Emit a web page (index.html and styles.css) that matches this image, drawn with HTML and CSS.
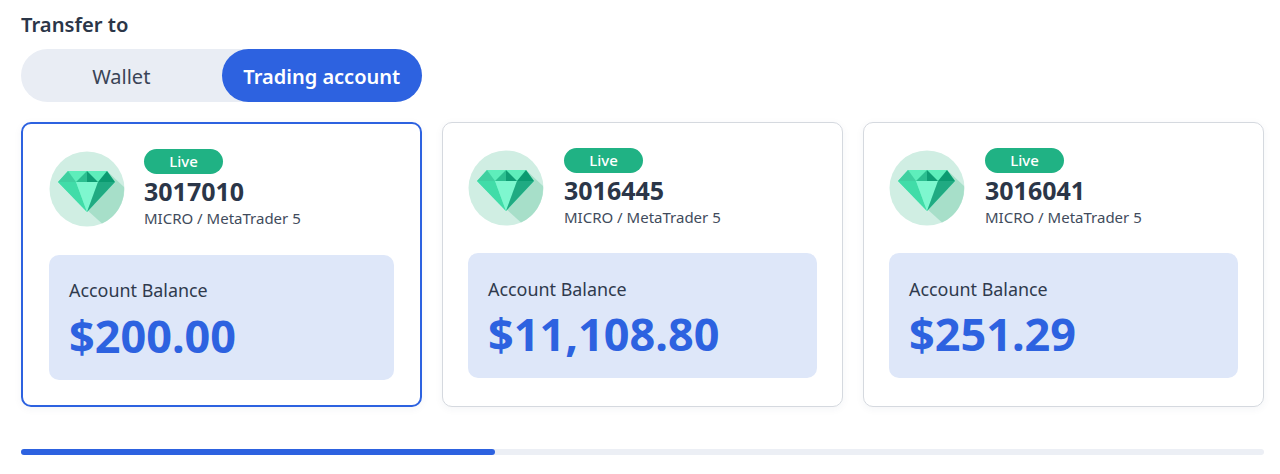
FILE: index.html
```html
<!DOCTYPE html>
<html lang="en">

<head>
  <meta charset="UTF-8" />
  <meta name="viewport" content="width=device-width, initial-scale=1.0" />
  <title>Transfer to</title>
  <link rel="stylesheet" href="styles.css">
</head>

<body>
  <svg class="defs" width="0" height="0">
    <symbol id="gem" viewBox="0 0 76 76">
      <circle cx="38" cy="38" r="37.5" fill="#d0eee3" />
      <path d="M58 20 L75 36 A37.5 37.5 0 0 1 53 72.5 L27 49 Z" fill="#a7dfc9" />
      <path d="M19 20 H58 L66 31 L38 61 L9 31 Z" fill="#5eeebb" />
      <path d="M19 20 L9 31 H27 Z" fill="#3fd0a0" />
      <path d="M38 20 L27 31 H38 Z" fill="#2cbf90" />
      <path d="M38 20 L49 31 H38 Z" fill="#0f9d74" />
      <path d="M58 20 L49 31 H66 Z" fill="#0b9a70" />
      <path d="M9 31 H27 L38 61 Z" fill="#41dca8" />
      <path d="M27 31 H49 L38 61 Z" fill="#7ef7cf" />
      <path d="M49 31 H66 L38 61 Z" fill="#20aa82" />
    </symbol>
  </svg>

  <div class="page">
    <p class="title">Transfer to</p>

    <div class="toggle">
      <button class="toggle-btn">Wallet</button>
      <button class="toggle-btn toggle-btn-active">Trading account</button>
    </div>

    <div class="cards">
      <div class="card card-selected">
        <div class="card-top">
          <svg class="gem-img"><use href="#gem" /></svg>
          <div class="card-info">
            <span class="badge">Live</span>
            <p class="account-id">3017010</p>
            <p class="account-type">MICRO / MetaTrader 5</p>
          </div>
        </div>
        <div class="balance">
          <p class="balance-label">Account Balance</p>
          <p class="balance-value">$200.00</p>
        </div>
      </div>

      <div class="card">
        <div class="card-top">
          <svg class="gem-img"><use href="#gem" /></svg>
          <div class="card-info">
            <span class="badge">Live</span>
            <p class="account-id">3016445</p>
            <p class="account-type">MICRO / MetaTrader 5</p>
          </div>
        </div>
        <div class="balance">
          <p class="balance-label">Account Balance</p>
          <p class="balance-value">$11,108.80</p>
        </div>
      </div>

      <div class="card">
        <div class="card-top">
          <svg class="gem-img"><use href="#gem" /></svg>
          <div class="card-info">
            <span class="badge">Live</span>
            <p class="account-id">3016041</p>
            <p class="account-type">MICRO / MetaTrader 5</p>
          </div>
        </div>
        <div class="balance">
          <p class="balance-label">Account Balance</p>
          <p class="balance-value">$251.29</p>
        </div>
      </div>
    </div>

    <div class="scroll-track">
      <div class="scroll-thumb"></div>
    </div>
  </div>
</body>

</html>
```

FILE: styles.css
```css
/* Global Reset */
p {
  margin: 0;
}

body {
  margin: 0;
  height: 474px;
  overflow: hidden;
  background-color: white;
  font-family: "Noto Sans", Arial, sans-serif;
  color: #2b3648;
}

.defs {
  display: block;
  height: 0;
}

.page {
  width: 1243px;
  padding: 10px 0 0 21px;
}

/* Title */
.title {
  font-size: 20.2px;
  line-height: 28px;
  font-weight: 600;
}

/* Toggle */
.toggle {
  display: flex;
  width: 401px;
  height: 53px;
  margin-top: 11px;
  border-radius: 27px;
  background-color: #e9edf4;
}

.toggle-btn {
  flex: 1;
  border: none;
  border-radius: 27px;
  background: none;
  font-family: inherit;
  font-size: 20px;
  color: #3a4456;
  padding: 2px 0 0;
}

.toggle-btn-active {
  background-color: #2d62e0;
  color: white;
  font-weight: 600;
}

/* Cards */
.cards {
  display: flex;
  gap: 20px;
  margin-top: 20px;
}

.card {
  width: 401px;
  height: 285px;
  box-sizing: border-box;
  padding: 25px 25px 0;
  border: 1px solid #d5d9df;
  border-radius: 10px;
  background-color: white;
  box-shadow: 0 2px 8px rgba(40, 60, 100, 0.05);
}

.card-selected {
  padding: 25px 26px 0;
  border: 2px solid #2d62e0;
}

.card-top {
  display: flex;
  gap: 20px;
  align-items: center;
  height: 80px;
}

.card-selected .card-top {
  gap: 19px;
}

.gem-img {
  width: 76px;
  height: 76px;
  flex-shrink: 0;
}

.card-info {
  display: flex;
  flex-direction: column;
  align-items: flex-start;
  padding-bottom: 2px;
}

.badge {
  width: 79px;
  height: 25px;
  border-radius: 13px;
  background-color: #20b284;
  color: white;
  font-size: 15px;
  font-weight: 500;
  line-height: 25px;
  text-align: center;
}

.account-id {
  font-size: 25px;
  line-height: 34px;
  font-weight: 700;
}

.account-type {
  font-size: 15px;
  line-height: 20px;
  color: #414b5c;
}

/* Balance box */
.balance {
  height: 125px;
  box-sizing: border-box;
  margin-top: 25px;
  padding: 24px 20px 0;
  border-radius: 10px;
  background-color: #dee7f9;
}

.card-selected .balance {
  margin-top: 26px;
  padding-top: 23px;
}

.balance-label {
  font-size: 17.9px;
  line-height: 24px;
  color: #2f3a4d;
}

.balance-value {
  margin-top: 3px;
  font-size: 45px;
  line-height: 60px;
  font-weight: 700;
  color: #2d62e0;
}

.card-selected .balance-value {
  margin-top: 4px;
}

/* Scroll indicator */
.scroll-track {
  height: 6px;
  margin-top: 42px;
  border-radius: 3px;
  background-color: #eceff5;
}

.scroll-thumb {
  width: 474px;
  height: 6px;
  border-radius: 3px;
  background-color: #2d62e0;
}
```
